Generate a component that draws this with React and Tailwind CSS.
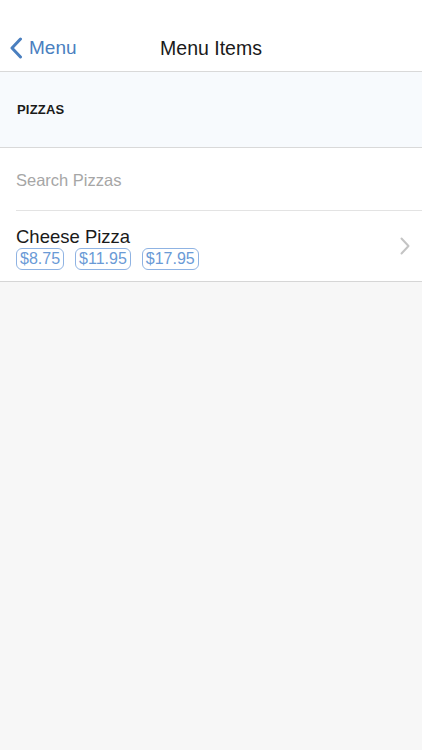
export default function App() {
  const font = { fontFamily: '"Helvetica Neue", "Liberation Sans", Arial, sans-serif' };
  return (
    <div className="w-[422px] h-[750px] bg-[#f7f7f7] flex flex-col" style={font}>
      <div className="h-[72px] bg-white flex items-end pb-[11px] relative border-b border-[#d9d9d9]">
        <div className="flex items-center pl-[9px] text-[#4a7fbf]">
          <svg width="14" height="22" viewBox="0 0 14 22" fill="none">
            <path d="M11.5 2 L3 11 L11.5 20" stroke="#4a7fbf" strokeWidth="3" strokeLinecap="round" strokeLinejoin="round" />
          </svg>
          <span className="ml-[6px] text-[19px] leading-[24px]">Menu</span>
        </div>
        <div className="absolute left-0 right-0 bottom-[11px] text-center text-[19.5px] leading-[24px] font-medium text-[#1a1a1a] pointer-events-none">Menu Items</div>
      </div>
      <div className="h-[76px] bg-[#f7fafd] border-b border-[#d9d9d9] flex items-center px-[17px]">
        <span className="text-[13px] font-bold text-[#1a1a1a] tracking-[0.2px]">PIZZAS</span>
      </div>
      <div className="bg-white border-b border-[#d6d6d6]">
        <div className="h-[62px] flex items-center px-[16px] pt-[2px]">
          <span className="text-[16.5px] text-[#a6a6a6]">Search Pizzas</span>
        </div>
        <div className="ml-[16px] border-t border-[#e3e3e3] h-[71px] flex items-center pr-[12px]">
          <div className="flex-1 flex flex-col pt-[3px]">
            <span className="text-[18.5px] leading-[21px] text-[#1a1a1a]">Cheese Pizza</span>
            <div className="flex gap-[11px] mt-[1px]">
              {["$8.75", "$11.95", "$17.95"].map((p) => (
                <span key={p} className="border border-[#8fb3e3] rounded-[6px] px-[3px] text-[16px] leading-[20px] text-[#6a9ad6]">{p}</span>
              ))}
            </div>
          </div>
          <svg width="10" height="18" viewBox="0 0 10 18" fill="none">
            <path d="M1.5 1.5 L8.5 9 L1.5 16.5" stroke="#c4c4c4" strokeWidth="2" strokeLinecap="round" strokeLinejoin="round" />
          </svg>
        </div>
      </div>
    </div>
  );
}
